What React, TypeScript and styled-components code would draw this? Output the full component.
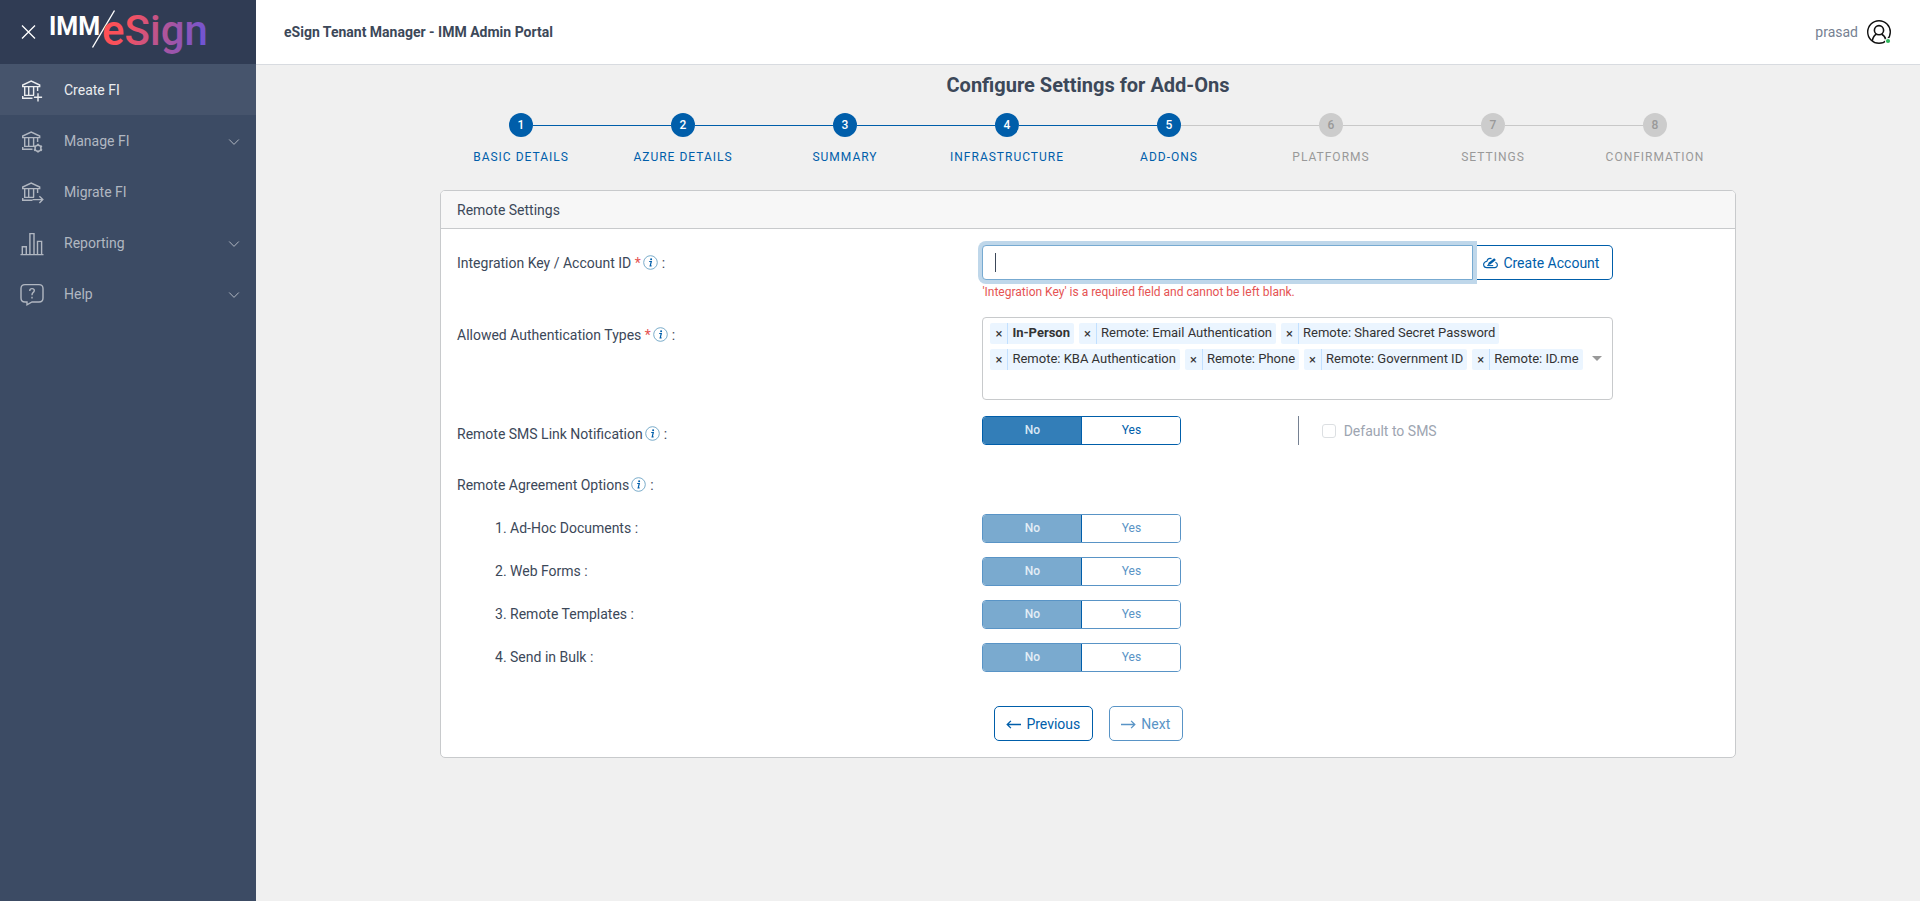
import React, { useState } from "react";
import styled, { createGlobalStyle, css } from "styled-components";

const color = {
  brand: "#005eaa",
  text: "#3c4859",
  sidebar: "#3c4b64",
  sidebarTop: "#303c54",
  border: "#c8cacc",
  danger: "#e55353",
  muted: "#9da5b1",
};

const GlobalStyle = createGlobalStyle`
  *, *::before, *::after { box-sizing: border-box; }
  body {
    margin: 0;
    background: #f0f0f0;
    color: ${color.text};
    font: 400 14px/21px Roboto, "Liberation Sans", sans-serif;
  }
  button, input { font: inherit; color: inherit; }
`;

/* ---------- Shell ---------- */

const Shell = styled.div`
  display: flex;
  min-height: 100vh;
`;

const Sidebar = styled.aside`
  flex: 0 0 256px;
  background: ${color.sidebar};
`;

const Brand = styled.div`
  display: flex;
  align-items: center;
  height: 64px;
  padding-left: 21px;
  background: ${color.sidebarTop};
`;

const CloseButton = styled.button`
  display: flex;
  padding: 0 0 2px;
  border: 0;
  background: none;
`;

const Logo = styled.svg`
  display: block;
  margin-left: 10px;
`;

const NavList = styled.ul`
  margin: 0;
  padding: 0;
  list-style: none;
`;

const NavLink = styled.a<{ $active?: boolean }>`
  display: flex;
  align-items: center;
  height: 51px;
  padding: 2px 16px 0 20px;
  color: ${(p) => (p.$active ? "#ebedef" : "#b1b7c1")};
  background: ${(p) => (p.$active ? "#46546c" : "transparent")};
  text-decoration: none;
`;

const NavText = styled.span`
  flex: 1;
  margin-left: 20px;
`;

const Main = styled.div`
  flex: 1;
  min-width: 0;
`;

const Header = styled.header`
  display: flex;
  align-items: center;
  justify-content: space-between;
  height: 65px;
  padding: 0 28px;
  background: #fff;
  border-bottom: 1px solid #d8dbe0;
`;

const AppTitle = styled.div`
  font-size: 14px;
  font-weight: 700;
`;

const UserButton = styled.button`
  display: flex;
  align-items: center;
  gap: 8px;
  padding: 0;
  border: 0;
  background: none;
  color: #768192;
`;

const Content = styled.main`
  max-width: 1328px;
  margin: 0 auto;
  padding: 8px 16px 32px;
`;

const PageTitle = styled.h1`
  margin: 0;
  font-size: 20px;
  line-height: 24px;
  font-weight: 700;
  text-align: center;
`;

/* ---------- Stepper ---------- */

const Steps = styled.ol`
  display: grid;
  grid-template-columns: repeat(8, 1fr);
  margin: 16px 0 23px;
  padding: 0;
  list-style: none;
`;

const Step = styled.li<{ $done: boolean }>`
  display: flex;
  flex-direction: column;
  align-items: center;
  gap: 10px;
  color: ${(p) => (p.$done ? color.brand : "#999")};
  font-size: 12px;
  line-height: 20px;
  letter-spacing: 1px;
  text-transform: uppercase;
`;

const Track = styled.div`
  display: flex;
  align-items: center;
  width: 100%;
`;

const Line = styled.span<{ $tone: "done" | "todo" | "none" }>`
  flex: 1;
  height: 1px;
  background: ${(p) => (p.$tone === "done" ? color.brand : p.$tone === "todo" ? "#c8c8c8" : "transparent")};
`;

const Dot = styled.span<{ $done: boolean }>`
  width: 24px;
  height: 24px;
  border-radius: 50%;
  background: ${(p) => (p.$done ? color.brand : "#ccc")};
  color: ${(p) => (p.$done ? "#fff" : "#999")};
  font-weight: 500;
  line-height: 25px;
  letter-spacing: normal;
  text-align: center;
`;

/* ---------- Card and form ---------- */

const Card = styled.section`
  border: 1px solid ${color.border};
  border-radius: 5px;
  background: #fff;
`;

const CardHeader = styled.h2`
  margin: 0;
  padding: 9px 16px 7px;
  border-bottom: 1px solid ${color.border};
  border-radius: 4px 4px 0 0;
  background: #f7f7f7;
  font-size: 14px;
  line-height: 21px;
  font-weight: 400;
`;

const CardBody = styled.form`
  padding: 16px 17px 16px 16px;
`;

const Row = styled.div<{ $gap: number }>`
  display: grid;
  grid-template-columns: 5fr 6fr 1fr;
  margin-bottom: ${(p) => p.$gap}px;
`;

const Label = styled.label<{ $indent?: boolean }>`
  display: flex;
  align-items: center;
  align-self: start;
  height: 36px;
  padding-left: ${(p) => (p.$indent ? 38 : 0)}px;
  white-space: pre;
`;

const OptionLabel = styled(Label)`
  height: 29px;
`;

const Required = styled.span`
  color: ${color.danger};
`;

const InfoIcon = styled.svg`
  margin: 0 4px 2px 2px;
`;

const InputGroup = styled.div`
  display: flex;
`;

/* The caret is painted as a background bar so it stays visible without blinking. */
const KeyInput = styled.input`
  position: relative;
  z-index: 1;
  flex: 1;
  min-width: 0;
  height: 35px;
  padding: 6px 12px;
  border: 1px solid #77aad1;
  border-radius: 4px 0 0 4px;
  outline: 0;
  background: #fff;
  box-shadow: 0 0 0 4px #bfd7ea;
  &:placeholder-shown {
    caret-color: transparent;
    background: #fff linear-gradient(${color.text}, ${color.text}) 12px center / 1px 19px no-repeat;
  }
`;

const outline = css`
  display: flex;
  align-items: center;
  justify-content: center;
  border: 1px solid ${color.brand};
  background: #fff;
  color: ${color.brand};
`;

const CreateButton = styled.button`
  ${outline}
  width: 140px;
  gap: 5px;
  padding: 1px 2px 0 0;
  border-left: 0;
  border-radius: 0 5px 5px 0;
`;

const ErrorText = styled.p`
  margin: 3px 0 0;
  color: ${color.danger};
  font-size: 12px;
  line-height: 18px;
`;

const MultiSelect = styled.div`
  display: flex;
  align-items: center;
  height: 83px;
  padding: 0 10px 0 7px;
  border: 1px solid ${color.border};
  border-radius: 4px;
`;

const Chips = styled.ul`
  display: flex;
  flex: 1;
  flex-wrap: wrap;
  align-content: flex-start;
  gap: 5px;
  height: 71px;
  margin: 0;
  padding: 0;
  list-style: none;
`;

const Chip = styled.li<{ $locked?: boolean }>`
  display: flex;
  height: 21px;
  border-radius: 2px;
  background: #ebf5ff;
  color: #333;
  font-size: 13px;
  line-height: 19px;
  font-weight: ${(p) => (p.$locked ? 700 : 400)};
`;

const ChipRemove = styled.button`
  width: 18px;
  padding: 0;
  border: 0;
  border-right: 1px solid #c2e0ff;
  background: none;
  font-weight: 400;
  line-height: 19px;
`;

const ChipText = styled.span`
  padding: 0 4px;
`;

const ArrowButton = styled.button`
  padding: 0;
  border: 0;
  background: none;
  line-height: 0;
`;

const Toggle = styled.div<{ $disabled?: boolean }>`
  display: flex;
  width: 199px;
  height: 29px;
  border: 1px solid ${(p) => (p.$disabled ? "#5994c6" : color.brand)};
  border-radius: 4px;
  overflow: hidden;
`;

const ToggleButton = styled.button<{ $on: boolean }>`
  flex: 1;
  padding: 0 0 2px;
  border: 0;
  font-size: 12px;
  line-height: 20px;
  font-weight: ${(p) => (p.$on ? 500 : 400)};
  color: ${(p) => (p.$on ? "#d9e8f4" : color.brand)};
  background: ${(p) => (p.$on ? "#337eb8" : "#fff")};
  & + & { border-left: 1px solid ${color.brand}; }
  &:disabled {
    color: ${(p) => (p.$on ? "#e3eef6" : "#5994c6")};
    background: ${(p) => (p.$on ? "#7aaacf" : "#fff")};
  }
`;

const SmsControls = styled.div`
  display: grid;
  grid-template-columns: 1fr 1fr;
  align-items: start;
`;

const DefaultSms = styled.label`
  display: flex;
  align-items: center;
  gap: 8px;
  height: 29px;
  padding: 1px 0 0 23px;
  border-left: 1px solid #768192;
  color: ${color.muted};
`;

const Checkbox = styled.input`
  appearance: none;
  width: 14px;
  height: 14px;
  margin: 0;
  border: 1px solid #dcdfe2;
  border-radius: 3px;
  background: #fff;
`;

const Actions = styled.div`
  display: grid;
  grid-template-columns: 5fr 7fr;
  padding-top: 20px;
`;

const ButtonPair = styled.div`
  display: flex;
  grid-column: 2;
  gap: 16px;
  padding-left: 12px;
`;

const NavButton = styled.button`
  ${outline}
  gap: 5px;
  height: 35px;
  padding: 1px 12px 0 11px;
  border-radius: 5px;
  &:disabled {
    border-color: #5994c6;
    color: #5994c6;
  }
`;

/* ---------- Icons ---------- */

const Bank = ({ children }: { children: React.ReactNode }) => (
  <svg width="24" height="24" viewBox="0 0 24 24" fill="none" stroke="currentColor" strokeWidth="1.4">
    <path d="M2.7 7.6V6L11.2 2L19.7 6V7.6ZM4.7 7.6V16.4M8.7 7.6V16.4M13.6 7.6V16.4M17.6 7.6V12M4 16.4H14M2.7 19.3H12.5M2.7 16.9V20" />
    {children}
  </svg>
);

const BankPlus = () => (
  <Bank>
    <path d="M18 14.2V22.4M13.9 18.3H22.1" />
  </Bank>
);

const BankGear = () => (
  <Bank>
    <circle cx="18" cy="18.2" r="3" strokeWidth="1.5" />
    <path d="M18 13.8V15.5M18 20.9V22.6M14 16L15.6 16.8M20.4 19.6L22 20.4M14 20.4L15.6 19.6M20.4 16.8L22 16" strokeWidth="1.8" />
  </Bank>
);

const BankArrow = () => (
  <Bank>
    <path d="M12.5 18.6H22.8M19.4 15.2L22.8 18.6L19.4 22" />
  </Bank>
);

const BarsIcon = () => (
  <svg width="24" height="24" viewBox="0 0 24 24" fill="none" stroke="currentColor" strokeWidth="1.4">
    <path d="M0.5 22.6H23.5M2.3 22.5V14.7H6.3V22.5M9.9 22.5V1.6H14V22.5M17.5 22.5V9.4H21.6V22.5" />
  </svg>
);

const HelpIcon = () => (
  <svg width="24" height="24" viewBox="0 0 24 24" fill="none" stroke="currentColor" strokeWidth="1.4">
    <path d="M5 1.6H19Q23 1.6 23 5.6V15Q23 19 19 19H12L7 21.8V19H5Q1 19 1 15V5.6Q1 1.6 5 1.6Z" />
    <path d="M9.8 8V7.4Q9.8 5.6 12 5.6Q14.3 5.6 14.3 7.6Q14.3 8.8 13 9.7Q12 10.4 12 12.2M12 13.8V15.4" />
  </svg>
);

const Chevron = () => (
  <svg width="12" height="8" viewBox="0 0 12 8" fill="none" stroke="currentColor">
    <path d="M1.2 1.5L6 6.4L10.8 1.5" />
  </svg>
);

const Info = () => (
  <InfoIcon width="15" height="15" viewBox="0 0 15 15" role="img" aria-label="Information">
    <circle cx="7.5" cy="7.5" r="6.8" fill="#fff" stroke="#6ba3c4" strokeWidth="0.9" />
    <circle cx="8.1" cy="4.2" r="1" fill={color.brand} />
    <path d="M6.2 6.5H8.3L7.2 10.8H8.6" fill="none" stroke={color.brand} strokeWidth="1.2" />
  </InfoIcon>
);

const UserIcon = () => (
  <svg width="26" height="26" viewBox="0 0 26 26" fill="none" stroke="#111" strokeWidth="1.4">
    <circle cx="13" cy="13" r="11.3" />
    <circle cx="13" cy="11.2" r="4.6" strokeWidth="1.6" />
    <path d="M6.2 21.8Q7.5 16.5 10.3 15.2M15.7 15.2Q18.6 16.5 19.8 20.5" strokeWidth="1.6" />
    <circle cx="22" cy="22" r="3" fill="#fff" stroke="none" />
    <circle cx="22" cy="22" r="2.1" fill="#2eb85c" stroke="none" />
  </svg>
);

const CloudPen = () => (
  <svg width="15" height="12" viewBox="0 0 15 12" fill="none" stroke="currentColor">
    <path d="M8.5 1.6Q5 0.6 3.9 4.2Q0.6 4.9 0.6 7.6Q0.8 10.6 4 10.6H11.6Q14.3 10.4 14.4 7.9Q14.4 6 12.4 5.2" strokeWidth="1.1" />
    <path d="M4.6 8.2L5.8 5.6L11.2 1.2L12.9 2.9L7.6 7.3Z" fill="currentColor" stroke="none" />
    <path d="M4.2 8.6H10.2" strokeWidth="1" />
  </svg>
);

const Arrow = ({ back }: { back?: boolean }) => (
  <svg width="15" height="9" viewBox="0 0 15 9" fill="none" stroke="currentColor" strokeWidth="1.3">
    <path d={back ? "M15 4.5H1.2M4.9 0.9L1.2 4.5L4.9 8.1" : "M0 4.5H13.8M10.1 0.9L13.8 4.5L10.1 8.1"} />
  </svg>
);

/* ---------- Data ---------- */

const navItems = [
  { text: "Create FI", icon: <BankPlus />, active: true },
  { text: "Manage FI", icon: <BankGear />, expandable: true },
  { text: "Migrate FI", icon: <BankArrow /> },
  { text: "Reporting", icon: <BarsIcon />, expandable: true },
  { text: "Help", icon: <HelpIcon />, expandable: true },
];

const steps = [
  "Basic Details",
  "Azure Details",
  "Summary",
  "Infrastructure",
  "Add-Ons",
  "Platforms",
  "Settings",
  "Confirmation",
];
const currentStep = 4;

const authTypes = [
  "In-Person",
  "Remote: Email Authentication",
  "Remote: Shared Secret Password",
  "Remote: KBA Authentication",
  "Remote: Phone",
  "Remote: Government ID",
  "Remote: ID.me",
];

const agreementOptions = ["Ad-Hoc Documents", "Web Forms", "Remote Templates", "Send in Bulk"];

/* ---------- Parts ---------- */

const YesNo = ({ id, disabled }: { id: string; disabled?: boolean }) => {
  const [yes, setYes] = useState(false);
  return (
    <Toggle $disabled={disabled} role="group" aria-labelledby={id}>
      <ToggleButton type="button" $on={!yes} disabled={disabled} onClick={() => setYes(false)}>
        No
      </ToggleButton>
      <ToggleButton type="button" $on={yes} disabled={disabled} onClick={() => setYes(true)}>
        Yes
      </ToggleButton>
    </Toggle>
  );
};

const lineTone = (from: number) => (from < currentStep ? "done" : "todo");

export default function App() {
  return (
    <>
      <GlobalStyle />
      <Shell>
        <Sidebar>
          <Brand>
            <CloseButton type="button" aria-label="Close menu">
              <svg width="15" height="15" viewBox="0 0 15 15" stroke="#fff" strokeWidth="1.3">
                <path d="M1 1.5L14 14.5M14 1.5L1 14.5" />
              </svg>
            </CloseButton>
            <Logo width="170" height="64" viewBox="0 0 170 64" role="img" aria-label="IMM eSign">
              <defs>
                <linearGradient id="esign" gradientUnits="userSpaceOnUse" x1="62" y1="24" x2="160" y2="48">
                  <stop offset="0" stopColor="#ff5055" />
                  <stop offset="0.2" stopColor="#f5515f" />
                  <stop offset="0.6" stopColor="#a9559f" />
                  <stop offset="1" stopColor="#6b55d8" />
                </linearGradient>
              </defs>
              <text x="3" y="35" fill="#fff" fontFamily="Roboto, sans-serif" fontWeight="700" fontSize="25">
                IMM
              </text>
              <path d="M46.5 47.5L68.5 10.5" stroke="#fff" strokeWidth="1.4" />
              <text x="56" y="45" fill="url(#esign)" fontFamily="Roboto, sans-serif" fontWeight="500" fontSize="42">
                eSign
              </text>
            </Logo>
          </Brand>
          <nav>
            <NavList>
              {navItems.map((item) => (
                <li key={item.text}>
                  <NavLink href="#" $active={item.active}>
                    {item.icon}
                    <NavText>{item.text}</NavText>
                    {item.expandable && <Chevron />}
                  </NavLink>
                </li>
              ))}
            </NavList>
          </nav>
        </Sidebar>

        <Main>
          <Header>
            <AppTitle>eSign Tenant Manager - IMM Admin Portal</AppTitle>
            <UserButton type="button">
              prasad
              <UserIcon />
            </UserButton>
          </Header>

          <Content>
            <PageTitle>Configure Settings for Add-Ons</PageTitle>

            <Steps>
              {steps.map((step, i) => (
                <Step key={step} $done={i <= currentStep}>
                  <Track>
                    <Line $tone={i === 0 ? "none" : lineTone(i - 1)} />
                    <Dot $done={i <= currentStep}>{i + 1}</Dot>
                    <Line $tone={i === steps.length - 1 ? "none" : lineTone(i)} />
                  </Track>
                  {step}
                </Step>
              ))}
            </Steps>

            <Card>
              <CardHeader>Remote Settings</CardHeader>
              <CardBody>
                <Row $gap={16}>
                  <Label htmlFor="integration-key">
                    Integration Key / Account ID <Required>*</Required>
                    <Info />:
                  </Label>
                  <div>
                    <InputGroup>
                      <KeyInput id="integration-key" type="text" placeholder=" " autoFocus />
                      <CreateButton type="button">
                        <CloudPen />
                        Create Account
                      </CreateButton>
                    </InputGroup>
                    <ErrorText>'Integration Key' is a required field and cannot be left blank.</ErrorText>
                  </div>
                </Row>

                <Row $gap={16}>
                  <Label as="div" id="auth-types">
                    Allowed Authentication Types <Required>*</Required>
                    <Info />:
                  </Label>
                  <MultiSelect role="group" aria-labelledby="auth-types">
                    <Chips>
                      {authTypes.map((type, i) => (
                        <Chip key={type} $locked={i === 0}>
                          <ChipRemove type="button" aria-label={"Remove " + type}>
                            ×
                          </ChipRemove>
                          <ChipText>{type}</ChipText>
                        </Chip>
                      ))}
                    </Chips>
                    <ArrowButton type="button" aria-label="Show options">
                      <svg width="10" height="5" viewBox="0 0 10 5">
                        <path d="M0 0H10L5 5Z" fill="#999" />
                      </svg>
                    </ArrowButton>
                  </MultiSelect>
                </Row>

                <Row $gap={15}>
                  <Label as="div" id="sms-link">
                    Remote SMS Link Notification
                    <Info />:
                  </Label>
                  <SmsControls>
                    <YesNo id="sms-link" />
                    <DefaultSms>
                      <Checkbox type="checkbox" disabled />
                      Default to SMS
                    </DefaultSms>
                  </SmsControls>
                </Row>

                <Row $gap={11}>
                  <Label as="div">
                    Remote Agreement Options
                    <Info />:
                  </Label>
                </Row>

                {agreementOptions.map((option, i) => (
                  <Row key={option} $gap={14}>
                    <OptionLabel as="div" id={"option-" + i} $indent>
                      {i + 1}. {option} :
                    </OptionLabel>
                    <YesNo id={"option-" + i} disabled />
                  </Row>
                ))}

                <Actions>
                  <ButtonPair>
                    <NavButton type="button">
                      <Arrow back />
                      Previous
                    </NavButton>
                    <NavButton type="button" disabled>
                      <Arrow />
                      Next
                    </NavButton>
                  </ButtonPair>
                </Actions>
              </CardBody>
            </Card>
          </Content>
        </Main>
      </Shell>
    </>
  );
}
